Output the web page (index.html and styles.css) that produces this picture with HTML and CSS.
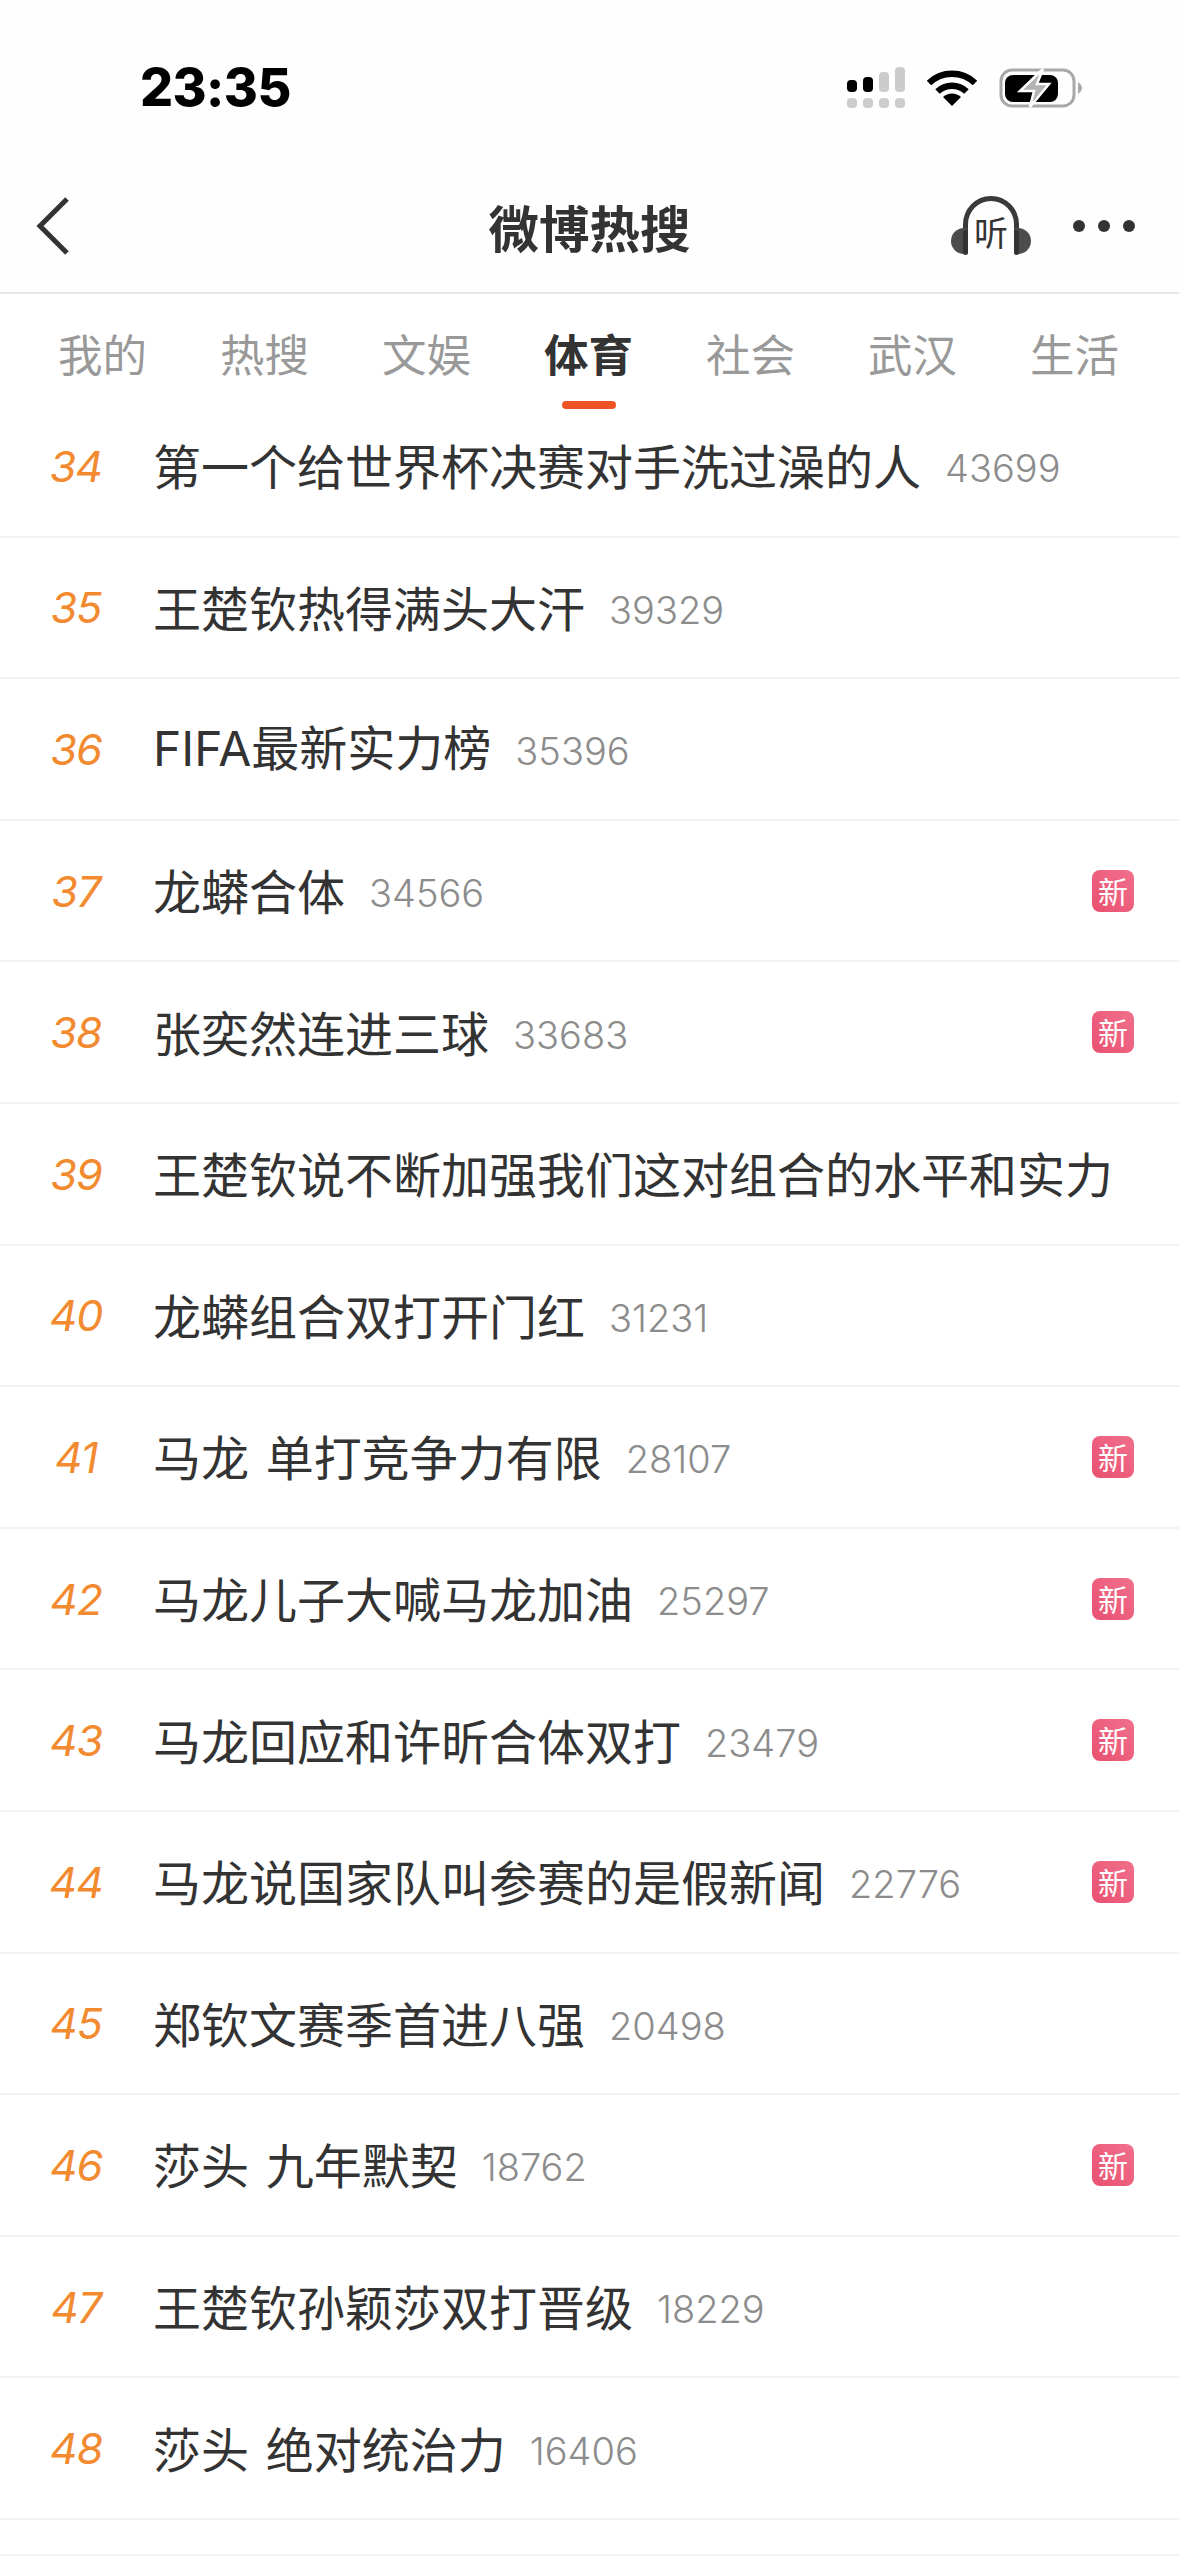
FILE: index.html
```html
<!DOCTYPE html>
<html lang="zh-CN">
<head>
<meta charset="utf-8">
<title>微博热搜</title>
<link rel="stylesheet" href="styles.css">
</head>
<body>
<div class="status">
  <span class="time">23:35</span>
  <div class="status-icons">
    <svg class="sig" width="58" height="41" viewBox="0 0 58 41">
      <rect x="0" y="13" width="10" height="12" rx="4" fill="#000"/>
      <rect x="16" y="10" width="10" height="15" rx="4" fill="#000"/>
      <rect x="32" y="5" width="10" height="20" rx="4" fill="#ccc"/>
      <rect x="48" y="0" width="10" height="25" rx="4" fill="#ccc"/>
      <rect x="0" y="31" width="10" height="10" rx="4" fill="#ccc"/>
      <rect x="16" y="31" width="10" height="10" rx="4" fill="#ccc"/>
      <rect x="32" y="31" width="10" height="10" rx="4" fill="#ccc"/>
      <rect x="48" y="31" width="10" height="10" rx="4" fill="#ccc"/>
    </svg>
    <svg class="wifi" width="50" height="37" viewBox="0 0 50 37">
      <path d="M2 14 A33 33 0 0 1 48 14" fill="none" stroke="#000" stroke-width="6.5"/>
      <path d="M10.5 22.5 A21 21 0 0 1 39.5 22.5" fill="none" stroke="#000" stroke-width="6.5"/>
      <path d="M25 37 L16 28 A13 13 0 0 1 34 28 Z" fill="#000"/>
    </svg>
    <svg class="batt" width="84" height="40" viewBox="0 0 84 40">
      <rect x="2" y="2" width="73" height="36" rx="11" fill="none" stroke="#a8a8a8" stroke-width="3"/>
      <rect x="6" y="7" width="53" height="27" rx="8" fill="#000"/>
      <path d="M79 14 Q83 17 83 20 Q83 23 79 26 Z" fill="#a8a8a8"/>
      <path d="M44 1 L21 23 L35 23 L31 39 L50 16 L38 16 Z" fill="#b4b4b4" stroke="#fff" stroke-width="2.5"/>
    </svg>
  </div>
</div>
<header class="nav">
  <div class="nav-left">
    <svg width="34" height="58" viewBox="0 0 34 58"><path d="M31 2 L4 29 L31 56" fill="none" stroke="#333" stroke-width="5"/></svg>
  </div>
  <h1 class="title">微博热搜</h1>
  <div class="nav-right">
    <div class="listen">
      <svg width="80" height="60" viewBox="0 0 80 60">
        <path d="M14.5 52 V28.5 A25.5 26 0 0 1 65.5 28.5 V52" fill="none" stroke="#3a3a3a" stroke-width="5"/>
        <path d="M16 32 V58 H13 A13 13 0 0 1 13 32 Z" fill="#4c4c4c"/>
        <path d="M64 32 V58 H67 A13 13 0 0 0 67 32 Z" fill="#4c4c4c"/>
        <rect x="12" y="34" width="5" height="25" rx="2.5" fill="#333"/>
        <rect x="63" y="34" width="5" height="25" rx="2.5" fill="#333"/>
      </svg>
      <span class="listen-text">听</span>
    </div>
    <div class="dots"><i></i><i></i><i></i></div>
  </div>
</header>
<nav class="tabs">
  <span class="tab">我的</span>
  <span class="tab">热搜</span>
  <span class="tab">文娱</span>
  <span class="tab active">体育</span>
  <span class="tab">社会</span>
  <span class="tab">武汉</span>
  <span class="tab">生活</span>
</nav>
<ul class="list">
  <li class="row"><span class="idx">34</span><span class="name">第一个给世界杯决赛对手洗过澡的人</span><span class="num">43699</span></li>
  <li class="row"><span class="idx">35</span><span class="name">王楚钦热得满头大汗</span><span class="num">39329</span></li>
  <li class="row"><span class="idx">36</span><span class="name"><span class="latin">FIFA</span>最新实力榜</span><span class="num">35396</span></li>
  <li class="row"><span class="idx">37</span><span class="name">龙蟒合体</span><span class="num">34566</span><span class="new">新</span></li>
  <li class="row"><span class="idx">38</span><span class="name">张奕然连进三球</span><span class="num">33683</span><span class="new">新</span></li>
  <li class="row"><span class="idx">39</span><span class="name">王楚钦说不断加强我们这对组合的水平和实力</span></li>
  <li class="row"><span class="idx">40</span><span class="name">龙蟒组合双打开门红</span><span class="num">31231</span></li>
  <li class="row"><span class="idx">41</span><span class="name">马龙 单打竞争力有限</span><span class="num">28107</span><span class="new">新</span></li>
  <li class="row"><span class="idx">42</span><span class="name">马龙儿子大喊马龙加油</span><span class="num">25297</span><span class="new">新</span></li>
  <li class="row"><span class="idx">43</span><span class="name">马龙回应和许昕合体双打</span><span class="num">23479</span><span class="new">新</span></li>
  <li class="row"><span class="idx">44</span><span class="name">马龙说国家队叫参赛的是假新闻</span><span class="num">22776</span><span class="new">新</span></li>
  <li class="row"><span class="idx">45</span><span class="name">郑钦文赛季首进八强</span><span class="num">20498</span></li>
  <li class="row"><span class="idx">46</span><span class="name">莎头 九年默契</span><span class="num">18762</span><span class="new">新</span></li>
  <li class="row"><span class="idx">47</span><span class="name">王楚钦孙颖莎双打晋级</span><span class="num">18229</span></li>
  <li class="row"><span class="idx">48</span><span class="name">莎头 绝对统治力</span><span class="num">16406</span></li>
</ul>
<div class="foot"></div>
</body>
</html>
```

FILE: styles.css
```css
* { box-sizing: border-box; }
html, body { margin: 0; padding: 0; }
body {
  width: 1179px;
  height: 2556px;
  overflow: hidden;
  background: #fff;
  font-family: "Noto Sans CJK SC", "Noto Sans", sans-serif;
  color: #333;
}
.status {
  height: 130px;
  padding: 0 96px 0 140px;
  display: flex;
  justify-content: space-between;
  align-items: flex-start;
  background: #fefefe;
}
.time {
  margin-top: 57px;
  font-family: Inter, "Liberation Sans", sans-serif;
  font-weight: 800;
  font-size: 52px;
  line-height: 62px;
  letter-spacing: -0.6px;
  color: #000;
}
.status-icons {
  margin-top: 67px;
  display: flex;
  align-items: center;
  gap: 22px;
}
.nav {
  height: 164px;
  padding-top: 30px;
  display: grid;
  grid-template-columns: 1fr auto 1fr;
  align-items: center;
  border-bottom: 2px solid #e8e8e8;
  background: #fefefe;
}
.nav-left { padding-left: 36px; display: flex; }
.title {
  margin: 0;
  font-size: 50.5px;
  line-height: 70px;
  font-weight: 700;
  color: #333;
}
.nav-right {
  padding-right: 44px;
  display: flex;
  justify-content: flex-end;
  align-items: center;
  gap: 42px;
}
.listen {
  position: relative;
  width: 80px;
  height: 60px;
}
.listen svg { display: block; }
.listen-text {
  position: absolute;
  left: 0;
  right: 0;
  top: 17px;
  text-align: center;
  font-size: 34px;
  line-height: 38px;
  color: #333;
}
.dots { display: flex; gap: 13px; }
.dots i {
  display: block;
  width: 12px;
  height: 12px;
  border-radius: 50%;
  background: #333;
}
.tabs {
  height: 102px;
  padding: 0 0 0 58px;
  display: flex;
  gap: 73px;
  align-items: flex-start;
  background: #fff;
}
.tab {
  position: relative;
  margin-top: 28px;
  font-size: 44.5px;
  line-height: 62px;
  color: #999;
  white-space: nowrap;
}
.tab.active {
  color: #333;
  font-weight: 700;
}
.tab.active::after {
  content: "";
  position: absolute;
  left: 18px;
  top: 79px;
  width: 54px;
  height: 8px;
  border-radius: 4px;
  background: #ee5423;
}
.list {
  margin: 0;
  padding: 0;
  list-style: none;
}
.row {
  height: 141.6px;
  display: flex;
  align-items: center;
  padding-right: 45px;
  border-bottom: 2px solid #f2f2f2;
}
.idx {
  flex: none;
  width: 153px;
  padding-right: 1px;
  text-align: center;
  font-family: Inter, "Liberation Sans", sans-serif;
  font-style: italic;
  font-weight: 400;
  font-size: 43px;
  letter-spacing: -1px;
  color: #f28a30;
}
.name {
  flex: none;
  margin-bottom: 3px;
  font-size: 48px;
  line-height: 66px;
  color: #333;
  white-space: nowrap;
  word-spacing: 6px;
}
.latin {
  font-family: Inter, "Liberation Sans", sans-serif;
  font-weight: 400;
  font-size: 48px;
}
.num {
  flex: none;
  margin-left: 24px;
  margin-top: 5px;
  font-family: Inter, "Liberation Sans", sans-serif;
  font-weight: 300;
  font-size: 38px;
  color: #8c8c8c;
}
.new {
  flex: none;
  margin-left: auto;
  width: 42px;
  height: 42px;
  border-radius: 8px;
  background: linear-gradient(45deg, #ea5070, #f0708c);
  color: #fff;
  font-size: 30px;
  line-height: 40px;
  text-align: center;
}
.foot {
  height: 36px;
  border-bottom: 2px solid #f2f2f2;
}
```
